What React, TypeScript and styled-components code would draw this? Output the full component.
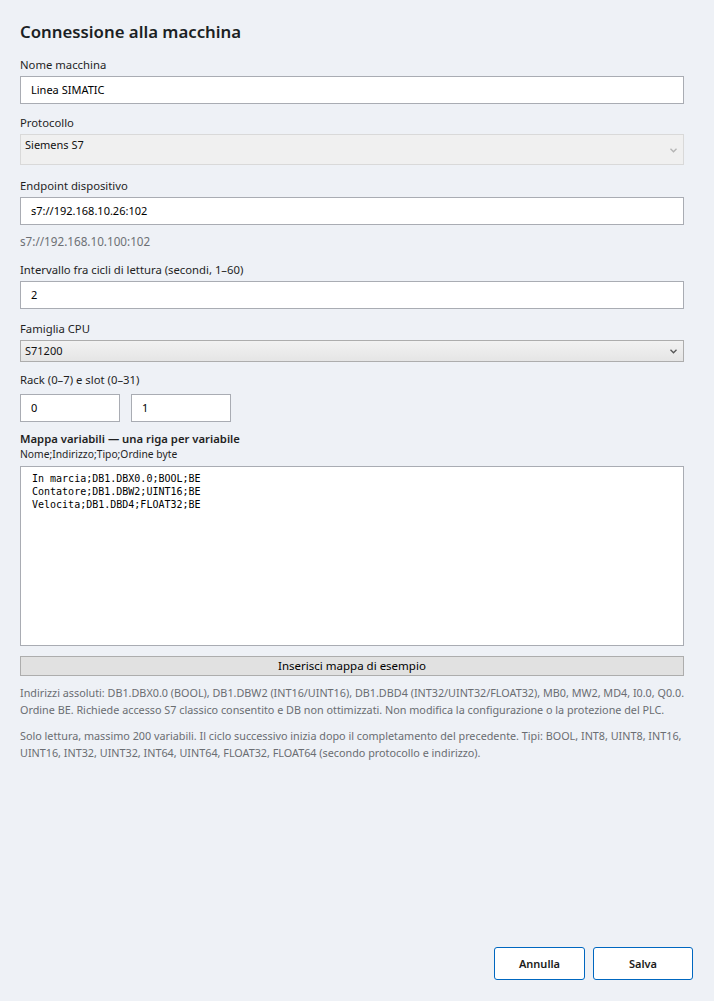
import React from "react";
import styled, { createGlobalStyle } from "styled-components";

const GlobalStyle = createGlobalStyle`
  html, body {
    margin: 0;
    padding: 0;
    background: #eef1f6;
  }
  * {
    box-sizing: border-box;
  }
`;

const Page = styled.div`
  min-height: 1001px;
  display: flex;
  flex-direction: column;
  font-family: "Noto Sans", "Segoe UI", sans-serif;
  color: #1f1f1f;
`;

const Form = styled.div`
  padding: 20px 30px 0 20px;
  display: flex;
  flex-direction: column;
`;

const Title = styled.h1`
  margin: 0 0 13px 0;
  font-size: 16.8px;
  font-weight: 600;
  line-height: 24px;
  color: #1b1f24;
`;

const Label = styled.div<{ gap?: number }>`
  font-size: 11.3px;
  line-height: 16px;
  margin-bottom: ${(p) => (p.gap ?? 3)}px;
`;

const BoldLabel = styled.div`
  font-size: 11.3px;
  line-height: 16px;
  font-weight: 600;
`;

const SubLabel = styled.div`
  font-size: 10.3px;
  line-height: 14px;
  margin-bottom: 5px;
`;

const Field = styled.div<{ after?: number }>`
  margin-bottom: ${(p) => (p.after ?? 11)}px;
`;

const TextBox = styled.div<{ w?: number }>`
  height: 28px;
  width: ${(p) => (p.w ? `${p.w}px` : "100%")};
  background: #fff;
  border: 1px solid #a9acb3;
  font-size: 11px;
  line-height: 26px;
  padding: 0 10px;
  color: #000;
`;

const Combo = styled.div<{ disabled?: boolean }>`
  position: relative;
  width: 100%;
  height: ${(p) => (p.disabled ? "31px" : "22px")};
  border: 1px solid ${(p) => (p.disabled ? "#d9d9d9" : "#adadad")};
  background: ${(p) =>
    p.disabled ? "#f0f0f0" : "linear-gradient(#f2f2f2, #e5e5e5)"};
  font-size: 11px;
  line-height: 20px;
  padding: 0 4px;
  color: #111;
`;

const Chevron = styled.svg<{ faded?: boolean }>`
  position: absolute;
  right: 6px;
  top: 50%;
  margin-top: -2px;
  width: 7px;
  height: 5px;
  color: ${(p) => (p.faded ? "#b3b3b3" : "#555")};
`;

const Hint = styled.div`
  font-size: 11.7px;
  color: #6d7075;
  margin: -2px 0 13px 0;
  line-height: 16px;
`;

const Row = styled.div`
  display: flex;
  gap: 11px;
`;

const TextArea = styled.div`
  height: 180px;
  background: #fff;
  border: 1px solid #a9acb3;
  padding: 5px 11px;
  font-family: "DejaVu Sans Mono", "Liberation Mono", monospace;
  font-size: 10px;
  line-height: 13px;
  white-space: pre;
  color: #000;
`;

const SampleButton = styled.div`
  margin-top: 10px;
  height: 20px;
  background: #e1e1e1;
  border: 1px solid #adadad;
  font-size: 11.5px;
  line-height: 18px;
  text-align: center;
  color: #000;
`;

const Note = styled.p<{ first?: boolean }>`
  margin: ${(p) => (p.first ? "8px" : "9px")} 0 0 0;
  font-size: 10.8px;
  line-height: 17px;
  color: #6a6d72;
  white-space: nowrap;
`;

const Footer = styled.div`
  margin-top: auto;
  display: flex;
  justify-content: flex-end;
  gap: 8px;
  padding: 0 21px 21px 0;
`;

const ActionButton = styled.button<{ w: number }>`
  width: ${(p) => p.w}px;
  height: 33px;
  background: #fff;
  border: 1px solid #0067c0;
  border-radius: 3px;
  font-family: "Noto Sans", "Segoe UI", sans-serif;
  font-size: 11px;
  font-weight: 600;
  color: #1b1b1b;
`;

const ChevronIcon = ({ faded }: { faded?: boolean }) => (
  <Chevron faded={faded} viewBox="0 0 7 5">
    <path d="M0.5 0.8 L3.5 3.8 L6.5 0.8" fill="none" stroke="currentColor" strokeWidth="1.3" />
  </Chevron>
);

const mapText = `In marcia;DB1.DBX0.0;BOOL;BE
Contatore;DB1.DBW2;UINT16;BE
Velocita;DB1.DBD4;FLOAT32;BE`;

function App() {
  return (
    <>
      <GlobalStyle />
      <Page>
        <Form>
          <Title>Connessione alla macchina</Title>

          <Field>
            <Label>Nome macchina</Label>
            <TextBox>Linea SIMATIC</TextBox>
          </Field>

          <Field after={13}>
            <Label>Protocollo</Label>
            <Combo disabled>
              Siemens S7
              <ChevronIcon faded />
            </Combo>
          </Field>

          <Field after={10}>
            <Label>Endpoint dispositivo</Label>
            <TextBox>s7://192.168.10.26:102</TextBox>
          </Field>
          <Hint>s7://192.168.10.100:102</Hint>

          <Field after={12}>
            <Label>Intervallo fra cicli di lettura (secondi, 1–60)</Label>
            <TextBox>2</TextBox>
          </Field>

          <Field after={10}>
            <Label>Famiglia CPU</Label>
            <Combo>
              S71200
              <ChevronIcon />
            </Combo>
          </Field>

          <Field after={9}>
            <Label gap={6}>Rack (0–7) e slot (0–31)</Label>
            <Row>
              <TextBox w={100}>0</TextBox>
              <TextBox w={100}>1</TextBox>
            </Row>
          </Field>

          <BoldLabel>Mappa variabili — una riga per variabile</BoldLabel>
          <SubLabel>Nome;Indirizzo;Tipo;Ordine byte</SubLabel>
          <TextArea>{mapText}</TextArea>
          <SampleButton>Inserisci mappa di esempio</SampleButton>

          <Note first>
            Indirizzi assoluti: DB1.DBX0.0 (BOOL), DB1.DBW2 (INT16/UINT16), DB1.DBD4 (INT32/UINT32/FLOAT32), MB0, MW2, MD4, I0.0, Q0.0.
            <br />
            Ordine BE. Richiede accesso S7 classico consentito e DB non ottimizzati. Non modifica la configurazione o la protezione del PLC.
          </Note>
          <Note>
            Solo lettura, massimo 200 variabili. Il ciclo successivo inizia dopo il completamento del precedente. Tipi: BOOL, INT8, UINT8, INT16,
            <br />
            UINT16, INT32, UINT32, INT64, UINT64, FLOAT32, FLOAT64 (secondo protocollo e indirizzo).
          </Note>
        </Form>

        <Footer>
          <ActionButton w={91}>Annulla</ActionButton>
          <ActionButton w={100}>Salva</ActionButton>
        </Footer>
      </Page>
    </>
  );
}

export default App;
